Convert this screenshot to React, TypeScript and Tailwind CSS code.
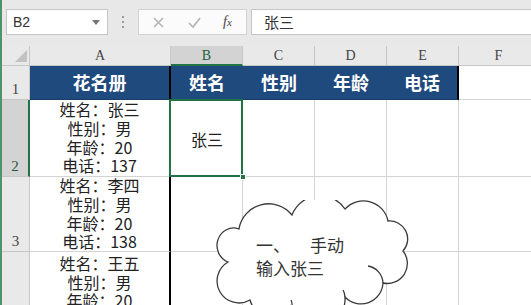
import React from "react";

const CJK = "font-['Noto_Sans_CJK_SC','Noto_Sans',sans-serif]";
const SERIF = "font-['Liberation_Serif','Noto_Sans_CJK_SC',serif]";

function ColHeader({ w, label, selected }: { w: string; label: string; selected?: boolean }) {
  return (
    <div
      className={`${w} shrink-0 h-full flex items-center justify-center border-r border-[#c6c6c6] ${
        selected ? "bg-[#d3d3d3] border-b-2 border-b-[#217346] text-[#1e5d3a]" : "bg-[#e9e9e9] border-b border-b-[#c6c6c6] text-[#444]"
      } ${SERIF} text-[14px] leading-none pt-[1px]`}
    >
      {label}
    </div>
  );
}

function RowHeader({ label, selected }: { label: string; selected?: boolean }) {
  return (
    <div
      className={`w-[28px] shrink-0 h-full flex items-end justify-center pb-[1px] border-b border-[#c6c6c6] ${
        selected ? "bg-[#d3d3d3] border-r-2 border-r-[#217346] text-[#1e5d3a]" : "bg-[#e9e9e9] border-r border-r-[#c6c6c6] text-[#444]"
      } ${SERIF} text-[15px] leading-[18px]`}
    >
      {label}
    </div>
  );
}

function PersonLines({ lines }: { lines: string[] }) {
  return (
    <>
      {lines.map((l, i) => (
        <div key={i} className="whitespace-nowrap">
          {l}
        </div>
      ))}
    </>
  );
}

const blankCell = "w-[72px] shrink-0 h-full border-r border-b border-[#d4d4d4]";
const blueCell = `w-[72px] shrink-0 h-full bg-[#1f4a7e] border-b border-b-[#1a3d68] flex items-center justify-center text-white font-bold text-[18px] ${CJK}`;

export default function App() {
  return (
    <div className="relative w-[531px] h-[305px] overflow-hidden bg-white border-l-2 border-[#4f9469]">
      {/* Toolbar */}
      <div className="h-[46px] bg-[#e8e8e8] flex items-start pt-[9px]">
        <div className="ml-[4px] shrink-0 w-[102px] h-[26px] bg-white border border-[#c6c6c6] flex items-center pl-[6px] pr-[7px] font-['Liberation_Sans',sans-serif] text-[14px] text-[#333]">
          <span className="flex-1">B2</span>
          <svg width="8" height="5" viewBox="0 0 8 5">
            <path d="M0 0 L8 0 L4 5 Z" fill="#777" />
          </svg>
        </div>
        <div className="shrink-0 w-[30px] h-[26px] flex flex-col items-center justify-center gap-[3px]">
          <div className="w-[2px] h-[2px] bg-[#9a9a9a]" />
          <div className="w-[2px] h-[2px] bg-[#9a9a9a]" />
          <div className="w-[2px] h-[2px] bg-[#9a9a9a]" />
        </div>
        <div className="shrink-0 w-[109px] h-[26px] bg-[#fbfbfb] border border-[#d2d2d2] flex items-center">
          <svg className="ml-[14px]" width="11" height="11" viewBox="0 0 11 11">
            <path d="M1 1 L10 10 M10 1 L1 10" stroke="#b4b4b4" strokeWidth="1.6" />
          </svg>
          <svg className="ml-[24px]" width="13" height="11" viewBox="0 0 13 11">
            <path d="M1 6 L5 10 L12 1" stroke="#b4b4b4" strokeWidth="1.7" fill="none" />
          </svg>
          <span className="ml-[22px] font-['Liberation_Serif',serif] italic text-[14px] text-[#444] leading-none">
            f<span className="text-[11px]">x</span>
          </span>
        </div>
        <div className="ml-[4px] flex-1 h-[26px] bg-white border border-[#c6c6c6] border-r-0 flex items-center pl-[12px] text-[15px] text-[#333]">
          <span className={CJK}>张三</span>
        </div>
      </div>

      {/* Column headers */}
      <div className="flex h-[20px]">
        <div className="w-[28px] shrink-0 h-full bg-[#e9e9e9] border-r border-b border-[#c6c6c6] relative">
          <svg className="absolute right-[2px] bottom-[3px]" width="12" height="12" viewBox="0 0 12 12">
            <path d="M12 0 L12 12 L0 12 Z" fill="#c2c2c2" />
          </svg>
        </div>
        <ColHeader w="w-[141px]" label="A" />
        <ColHeader w="w-[72px]" label="B" selected />
        <ColHeader w="w-[72px]" label="C" />
        <ColHeader w="w-[72px]" label="D" />
        <ColHeader w="w-[72px]" label="E" />
        <ColHeader w="w-[80px]" label="F" />
      </div>

      {/* Row 1 */}
      <div className="flex h-[34px]">
        <RowHeader label="1" />
        <div className={`w-[141px] shrink-0 h-full bg-[#1f4a7e] border-r-2 border-r-black border-b border-b-[#1a3d68] flex items-center justify-center text-white font-bold text-[18px] ${CJK}`}>
          花名册
        </div>
        <div className={blueCell}>姓名</div>
        <div className={blueCell}>性别</div>
        <div className={blueCell}>年龄</div>
        <div className={`${blueCell} border-r-2 border-r-black`}>电话</div>
        <div className="w-[80px] shrink-0 h-full border-b border-[#d4d4d4]" />
      </div>

      {/* Row 2 */}
      <div className="flex h-[77px]">
        <RowHeader label="2" selected />
        <div className={`w-[141px] shrink-0 h-full border-r-2 border-r-black border-b border-b-[#d4d4d4] flex flex-col items-center justify-end pb-[1px] text-[16px] leading-[18.7px] text-[#222] ${CJK}`}>
          <PersonLines lines={["姓名：张三", "性别：男", "年龄：20", "电话：137"]} />
        </div>
        <div className={`relative w-[72px] shrink-0 h-full flex items-center justify-center text-[16px] text-[#222] ${CJK}`}>
          张三
          <div className="absolute -left-[2px] -top-[1px] right-0 bottom-0 border-2 border-[#217346]" />
          <div className="absolute -right-[3px] -bottom-[3px] w-[6px] h-[6px] bg-[#217346] border border-white" />
        </div>
        <div className={blankCell} />
        <div className={blankCell} />
        <div className={blankCell} />
        <div className="w-[80px] shrink-0 h-full border-b border-[#d4d4d4]" />
      </div>

      {/* Row 3 */}
      <div className="flex h-[75px]">
        <RowHeader label="3" />
        <div className={`w-[141px] shrink-0 h-full border-r-2 border-r-black border-b border-b-[#d4d4d4] flex flex-col items-center justify-end text-[16px] leading-[18.7px] text-[#222] ${CJK}`}>
          <PersonLines lines={["姓名：李四", "性别：男", "年龄：20", "电话：138"]} />
        </div>
        <div className={blankCell} />
        <div className={blankCell} />
        <div className={blankCell} />
        <div className={blankCell} />
        <div className="w-[80px] shrink-0 h-full border-b border-[#d4d4d4]" />
      </div>

      {/* Row 4 */}
      <div className="flex h-[80px]">
        <RowHeader label="" />
        <div className={`w-[141px] shrink-0 h-full border-r-2 border-r-black flex flex-col items-center justify-start pt-[2px] text-[16px] leading-[18.7px] text-[#222] ${CJK}`}>
          <PersonLines lines={["姓名：王五", "性别：男", "年龄：20", "电话：139"]} />
        </div>
        <div className="w-[72px] shrink-0 h-full border-r border-[#d4d4d4]" />
        <div className="w-[72px] shrink-0 h-full border-r border-[#d4d4d4]" />
        <div className="w-[72px] shrink-0 h-full border-r border-[#d4d4d4]" />
        <div className="w-[72px] shrink-0 h-full border-r border-[#d4d4d4]" />
        <div className="w-[80px] shrink-0 h-full" />
      </div>

      {/* Cloud callout */}
      <svg className="absolute left-[214px] top-[200px]" width="200" height="110" viewBox="216 200 200 110">
        <path
          d="M 228 262 A 16 17 0 0 1 239 229 A 30 30 0 0 1 292 215 A 30 30 0 0 1 345 209 A 25 25 0 0 1 388 221 A 18 18 0 0 1 403 251 A 20 20 0 0 1 383 283 A 22 22 0 0 1 345 297 A 28 28 0 0 1 290 306 A 22 22 0 0 1 250 300 A 20 20 0 0 1 228 262 Z"
          fill="white"
          stroke="#3a3a3a"
          strokeWidth="1.3"
        />
        <path d="M 368 266 A 18 18 0 0 1 383 283" fill="none" stroke="#3a3a3a" strokeWidth="1.3" />
        <path d="M 343 290 A 14 14 0 0 1 345 297" fill="none" stroke="#3a3a3a" strokeWidth="1.3" />
        <path d="M 291 300 A 10 10 0 0 1 292 306" fill="none" stroke="#3a3a3a" strokeWidth="1.2" />
      </svg>
      <div className={`absolute left-[254px] top-[233px] text-[17px] leading-[23px] text-[#333] ${CJK}`}>
        <div className="whitespace-nowrap">
          一、<span className="ml-[20px]">手动</span>
        </div>
        <div className="whitespace-nowrap">输入张三</div>
      </div>
    </div>
  );
}
